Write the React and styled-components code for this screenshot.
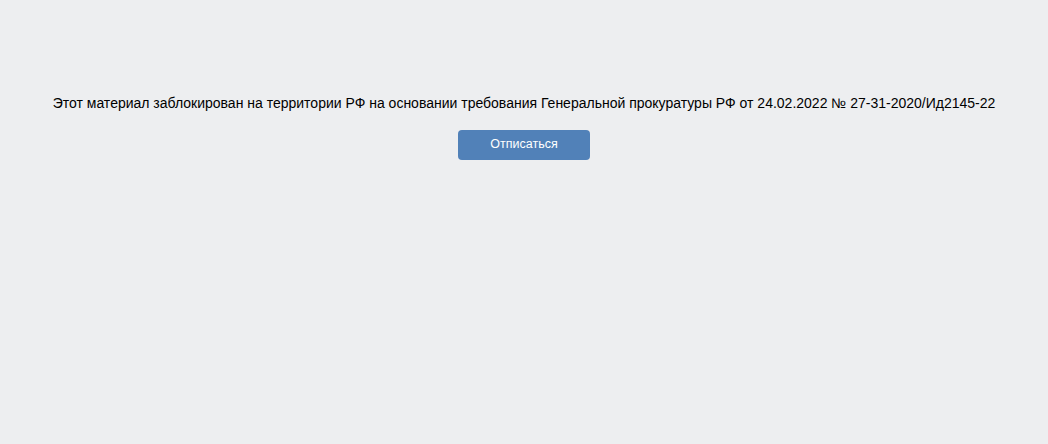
import React from "react";
import styled, { createGlobalStyle } from "styled-components";

const Global = createGlobalStyle`
  html, body { margin: 0; padding: 0; background: #edeef0; }
  body { font-family: "Liberation Sans", Arial, sans-serif; }
`;

const Page = styled.div`
  min-height: 444px;
  background: #edeef0;
  display: flex;
  flex-direction: column;
  align-items: center;
  padding-top: 94px;
  box-sizing: border-box;
`;

const Message = styled.div`
  font-size: 14px;
  line-height: 18px;
  color: #000;
  text-align: center;
`;

const Button = styled.button`
  margin-top: 18px;
  width: 132px;
  height: 30px;
  border: 0;
  border-radius: 4px;
  background: #5181b8;
  color: #fff;
  font-family: "Liberation Sans", Arial, sans-serif;
  font-size: 12.5px;
  cursor: pointer;
  padding: 0 0 2px;
`;

export default function App() {
  return (
    <>
      <Global />
      <Page>
        <Message>
          Этот материал заблокирован на территории РФ на основании требования Генеральной прокуратуры РФ от 24.02.2022 № 27-31-2020/Ид2145-22
        </Message>
        <Button>Отписаться</Button>
      </Page>
    </>
  );
}
